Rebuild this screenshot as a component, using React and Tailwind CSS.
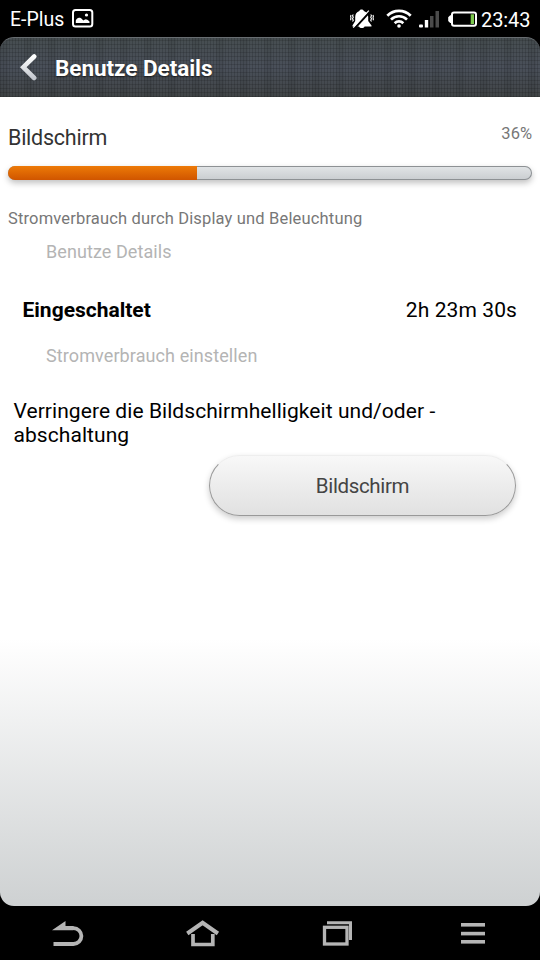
const USAGE = {
  name: 'Bildschirm',
  percent: 36,
  description: 'Stromverbrauch durch Display und Beleuchtung',
}

function PictureIcon() {
  return (
    <svg className="ml-[8px] h-[19px] w-[22px]" viewBox="0 0 22 19" fill="none">
      <rect x="1" y="1" width="19.300" height="16.500" rx="2.500" stroke="#fff" strokeWidth="2" />
      <path d="M3.800 14v-2.500c1-2.600 2.500-3.200 4.300-2.700 1.500.4 2.200 1.800 3.300 2.600 1-.2 1.700-1.300 2.900-1 1.500.3 2.400 1.200 3.200 2V14z" fill="#fff" />
      <circle cx="14.500" cy="6" r="1.600" fill="#fff" />
    </svg>
  )
}

function MutedBellIcon() {
  return (
    <svg className="h-[20px] w-[24px]" viewBox="0 0 24 20" fill="none">
      <path d="M11.500.6c1.300 0 2 .6 2.300 1.300 2.900.9 4.400 3.200 4.400 6.200v4l3.300 4.500v.9h-6.900c-.5 1-1.500 1.600-2.800 1.600s-2.300-.6-2.800-1.600H2.500v-.9l2.700-4.500v-4c0-3 1.400-5.300 4.200-6.200.3-.7.800-1.300 2.100-1.300z" fill="#fff" />
      <path d="M4.600 19.200L20 2.400" stroke="#000" strokeWidth="2.200" />
      <path d="M3.200 18.600L18.800 1.600" stroke="#fff" strokeWidth="1.200" />
      <path d="M3.300 5.500l-.8 1.300.8 1.500-.8 1.500.8 1.400-.8 1.300M1 6l-.4 1.500.4 1.200-.4 1.500.4 1M20.700 5.500l.8 1.300-.8 1.500.8 1.500-.8 1.400.8 1.300M23 6l.4 1.500-.4 1.200.4 1.500-.4 1" stroke="#fff" strokeWidth="1.100" />
    </svg>
  )
}

function WifiIcon() {
  return (
    <svg className="ml-[12px] h-[19px] w-[26px]" viewBox="0 0 26 19" fill="none" stroke="#fff" strokeWidth="2.700">
      <path d="M1.300 6.800a16.300 16.300 0 0 1 23.400 0" />
      <path d="M5 10.600a11.200 11.200 0 0 1 16 0" />
      <path d="M8.700 14.200a6 6 0 0 1 8.600 0" />
      <circle cx="13" cy="17" r="1.800" fill="#fff" stroke="none" />
    </svg>
  )
}

function SignalIcon() {
  return (
    <svg className="ml-[7px] mt-[2px] h-[17px] w-[21px]" viewBox="0 0 21 17">
      <rect x="0" y="13.500" width="4" height="3" rx="1" fill="#fff" />
      <rect x="5.800" y="9" width="3.400" height="7.500" fill="#fff" />
      <rect x="11" y="5" width="3.500" height="11.500" fill="#4b4b4b" />
      <rect x="16.500" y="0" width="3.500" height="16.500" fill="#4b4b4b" />
    </svg>
  )
}

function BatteryIcon() {
  return (
    <svg className="ml-[8px] mt-[2px] h-[17px] w-[30px]" viewBox="0 0 30 17" fill="none">
      <rect x="4" y="1.500" width="24" height="13.300" rx="2" stroke="#fff" strokeWidth="2" />
      <path d="M3.800 4.300H2.200L.2 6.300v3.600l2 2h1.600z" fill="#fff" />
      <rect x="22.700" y="3.300" width="3.300" height="9.700" fill="#7cc84c" />
    </svg>
  )
}

function StatusBar() {
  return (
    <div className="flex h-[37px] items-center bg-black pl-[10px] pr-[10px] text-white">
      <span className="mt-[2px] text-[19.500px] leading-[37px]">E-Plus</span>
      <PictureIcon />
      <div className="ml-auto flex items-center">
        <MutedBellIcon />
        <WifiIcon />
        <SignalIcon />
        <BatteryIcon />
        <span className="ml-[3px] mt-[3px] w-[49px] whitespace-nowrap text-[20px] leading-[37px] tracking-[-0.1px]">23:43</span>
      </div>
    </div>
  )
}

function Header() {
  return (
    <header className="h-[60px] rounded-t-[14px] border-t border-[#686d71] bg-linear-to-b from-[#464d50] via-[#494f59] to-[#404446]">
      <div className="flex h-full items-center rounded-t-[14px] bg-[repeating-linear-gradient(90deg,rgba(0,0,0,0.13)_0_1px,transparent_1px_3px),repeating-linear-gradient(0deg,rgba(0,0,0,0.13)_0_1px,transparent_1px_4px),repeating-linear-gradient(90deg,rgba(0,0,0,0.05)_0_8px,transparent_8px_24px)] pl-[20px]">
        <svg className="-mt-[2px] h-[28px] w-[18px]" viewBox="0 0 18 28" fill="none">
          <defs>
            <linearGradient id="chevron" x1="0" y1="0" x2="0" y2="1">
              <stop offset="0" stopColor="#fff" />
              <stop offset="1" stopColor="#c4c8cf" />
            </linearGradient>
          </defs>
          <path d="M14.200 3.500L3.300 14.200 14.200 25" stroke="url(#chevron)" strokeWidth="4.600" strokeLinecap="round" strokeLinejoin="miter" />
        </svg>
        <h1 className="ml-[17px] mt-[3px] text-[22.500px] font-bold tracking-[-0.05px] text-white [text-shadow:0_1px_2px_rgba(0,0,0,0.6)]">Benutze Details</h1>
      </div>
    </header>
  )
}

function UsageBar({ percent }) {
  return (
    <div className="mt-[15px] h-[14px] overflow-hidden rounded-full bg-linear-to-b from-[#e2e5e7] to-[#c9cdd0] shadow-[0_3px_6px_rgba(0,0,0,0.25),inset_0_0_0_1px_#8d9194]">
      <div className="h-full bg-linear-to-b from-[#ed7a08] to-[#d05500]" style={{ width: `${percent}%` }} />
    </div>
  )
}

function NavBar() {
  return (
    <nav className="grid h-[54px] grid-cols-4 items-center justify-items-center bg-black">
      <svg className="h-[32px] w-[36px]" viewBox="0 0 36 32" fill="none">
        <path d="M2 13.200L15.500 4v5h8v4.200z" fill="#b5b5b5" />
        <path d="M13 11.200h10.500a7.900 7.900 0 0 1 0 15.800H3.500" stroke="#b5b5b5" strokeWidth="3.800" />
      </svg>
      <svg className="h-[32px] w-[36px]" viewBox="0 0 36 32" fill="none" stroke="#b5b5b5" strokeWidth="4">
        <path d="M2.300 16.500L17.600 5.800 32.900 16.500" />
        <path d="M8 17v10.500h19.800V17" strokeWidth="3.700" />
      </svg>
      <svg className="h-[32px] w-[36px]" viewBox="0 0 36 32" fill="none" stroke="#b5b5b5" strokeWidth="3">
        <rect x="4.500" y="10.300" width="22.500" height="16.700" strokeWidth="3.300" />
        <path d="M7 5.700h23.500v17.400" />
      </svg>
      <svg className="h-[32px] w-[36px]" viewBox="0 0 36 32" fill="#b5b5b5">
        <rect x="6" y="6" width="24" height="3.600" />
        <rect x="6" y="14.800" width="24" height="3.600" />
        <rect x="6" y="23" width="24" height="3.600" />
      </svg>
    </nav>
  )
}

export default function App() {
  return (
    <div className="flex h-[960px] w-[540px] flex-col overflow-hidden bg-black font-[Roboto,sans-serif]">
      <StatusBar />
      <Header />
      <main className="flex-1 rounded-b-[14px] bg-linear-to-b from-white from-67% to-[#ced1d2]">
        <section className="px-[8px] pt-[26px]">
          <div className="flex h-[28px] items-start justify-between">
            <h2 className="text-[21.500px] leading-[30px] tracking-[-0.25px] text-[#333]">{USAGE.name}</h2>
            <span className="text-[16.500px] leading-[22px] text-[#777]">{USAGE.percent}%</span>
          </div>
          <UsageBar percent={USAGE.percent} />
          <p className="mt-[29px] whitespace-nowrap text-[16.500px] leading-[20px] tracking-[0.16px] text-[#777]">{USAGE.description}</p>
        </section>

        <h3 className="ml-[46px] mt-[11px] text-[18px] leading-[24px] tracking-[0.08px] text-[#b4b4b4]">Benutze Details</h3>
        <div className="mt-[32px] flex justify-between pl-[22.500px] pr-[23px] text-[21px] leading-[28px] text-black">
          <span className="font-bold">Eingeschaltet</span>
          <span className="tracking-[0.1px]">2h 23m 30s</span>
        </div>

        <h3 className="ml-[46px] mt-[20px] text-[18px] leading-[24px] tracking-[0.1px] text-[#b4b4b4]">Stromverbrauch einstellen</h3>
        <p className="ml-[13.500px] mt-[31px] text-[21px] leading-[24px] tracking-[0.06px] text-black">
          Verringere die Bildschirmhelligkeit und/oder -<br />
          abschaltung
        </p>
        <button className="ml-[209px] mt-[8px] block h-[61px] w-[307px] rounded-full border border-t-[#eee] border-[#999] bg-linear-to-b from-[#f8f8f8] to-[#e1e1e1] pt-[2px] text-[20.500px] tracking-[-0.35px] text-[#444] shadow-[0_3px_6px_rgba(0,0,0,0.2)]">
          Bildschirm
        </button>
      </main>
      <NavBar />
    </div>
  )
}
